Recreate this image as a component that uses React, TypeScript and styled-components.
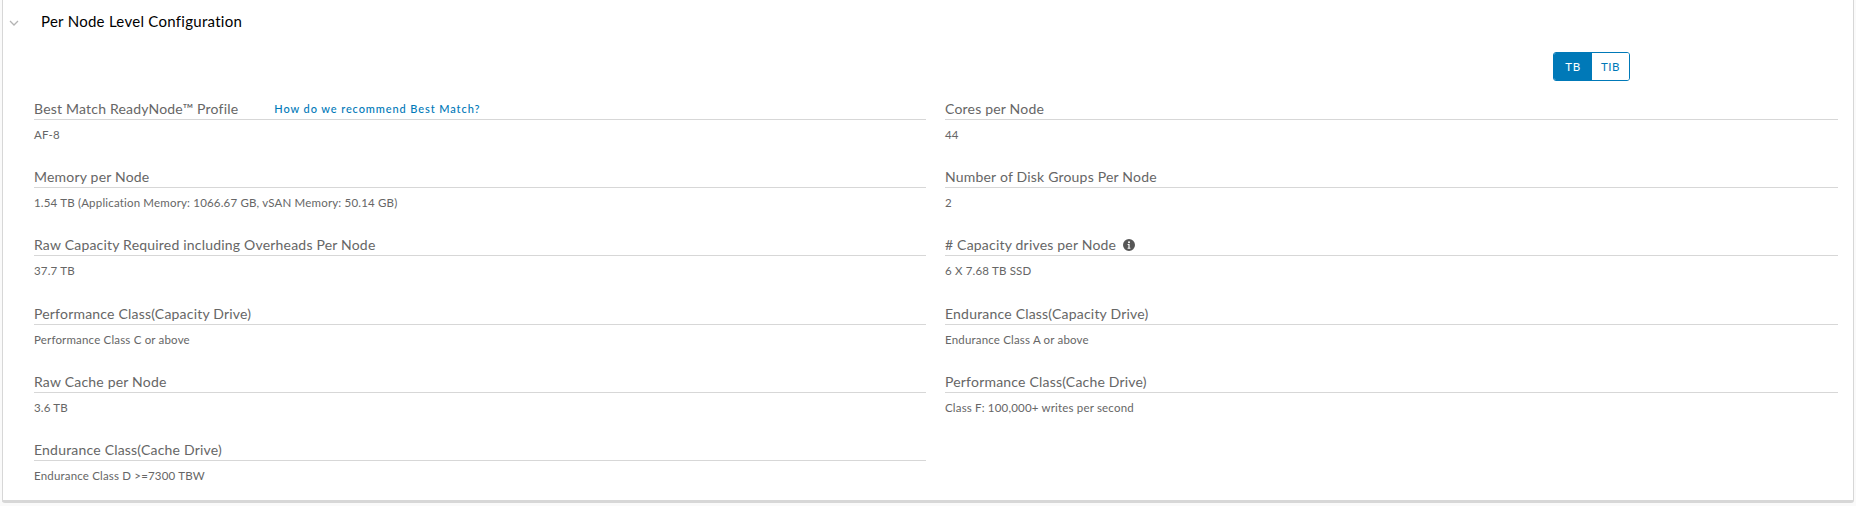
import { FC, ReactNode } from 'react';
import styled, { createGlobalStyle } from 'styled-components';

const GlobalStyle = createGlobalStyle`
  html, body {
    margin: 0;
    padding: 0;
    background: #fafafa;
    font-family: Lato, "Noto Sans", sans-serif;
  }
`;

const Page = styled.div`
  padding: 0 2px 0 2px;
  height: 506px;
  box-sizing: border-box;
  overflow: hidden;
`;

const Card = styled.section`
  box-sizing: border-box;
  height: 503px;
  background: #fff;
  border: 1px solid #d7d7d7;
  border-top: none;
  border-bottom-width: 3px;
  border-radius: 0 0 3px 3px;
`;

const CardHeader = styled.header`
  display: flex;
  align-items: center;
  height: 41px;
  padding-left: 4px;
`;

const Chevron = styled.svg`
  width: 14px;
  height: 14px;
  margin-top: 4px;
  margin-right: 20px;
  fill: none;
  stroke: #b4b4b4;
  stroke-width: 1.3;
`;

const CardTitle = styled.h2`
  margin: 0;
  font-size: 15px;
  line-height: 20px;
  font-weight: 400;
  letter-spacing: 0.28px;
  color: #000;
`;

const UnitRow = styled.div`
  display: flex;
  justify-content: flex-end;
  height: 29px;
  margin-top: 11px;
  padding-right: 223px;
`;

const Toggle = styled.div`
  display: flex;
  box-sizing: border-box;
  width: 77px;
  height: 29px;
  border: 1px solid #0079b8;
  border-radius: 3px;
  overflow: hidden;
`;

const UnitButton = styled.button<{ $active?: boolean }>`
  flex: ${(p) => (p.$active ? '0 0 38px' : '1')};
  padding: 0;
  border: none;
  font-family: inherit;
  font-size: 11.5px;
  letter-spacing: 0.6px;
  background: ${(p) => (p.$active ? '#0079b8' : '#fff')};
  color: ${(p) => (p.$active ? '#fff' : '#0079b8')};
`;

const Grid = styled.div`
  display: grid;
  grid-template-columns: 892px 893px;
  column-gap: 19px;
  row-gap: 26.2px;
  padding: 19px 0 0 31px;
`;

const Field = styled.div`
  min-width: 0;
`;

const Label = styled.div`
  display: flex;
  align-items: center;
  box-sizing: border-box;
  height: 20px;
  padding-bottom: 2px;
  border-bottom: 1px solid #d7d7d7;
  font-size: 14px;
  letter-spacing: 0.2px;
  color: #666;
`;

const Value = styled.div`
  margin-top: 7px;
  font-size: 11.5px;
  line-height: 15px;
  letter-spacing: 0.18px;
  color: #666;
`;

const HelpLink = styled.a`
  margin-left: 36px;
  font-size: 11px;
  font-weight: 500;
  letter-spacing: 0.9px;
  color: #0079b8;
`;

const InfoIcon = styled.svg`
  width: 12px;
  height: 12px;
  margin-left: 7px;
  fill: #565656;
`;

type FieldProps = {
  label: ReactNode;
  value: string;
};

const fields: FieldProps[] = [
  {
    label: (
      <>
        Best Match ReadyNode™ Profile
        <HelpLink>How do we recommend Best Match?</HelpLink>
      </>
    ),
    value: 'AF-8',
  },
  { label: 'Cores per Node', value: '44' },
  {
    label: 'Memory per Node',
    value: '1.54 TB (Application Memory: 1066.67 GB, vSAN Memory: 50.14 GB)',
  },
  { label: 'Number of Disk Groups Per Node', value: '2' },
  { label: 'Raw Capacity Required including Overheads Per Node', value: '37.7 TB' },
  {
    label: (
      <>
        # Capacity drives per Node
        <InfoIcon viewBox="0 0 12 12">
          <path
            fillRule="evenodd"
            d="M6 0a6 6 0 1 1 0 12A6 6 0 0 1 6 0ZM6 2.2a1 1 0 1 0 0 2 1 1 0 0 0 0-2ZM4.6 5v1h.8v2.8h-.8v1h2.8v-1h-.8V5Z"
          />
        </InfoIcon>
      </>
    ),
    value: '6 X 7.68 TB SSD',
  },
  { label: 'Performance Class(Capacity Drive)', value: 'Performance Class C or above' },
  { label: 'Endurance Class(Capacity Drive)', value: 'Endurance Class A or above' },
  { label: 'Raw Cache per Node', value: '3.6 TB' },
  { label: 'Performance Class(Cache Drive)', value: 'Class F: 100,000+ writes per second' },
  { label: 'Endurance Class(Cache Drive)', value: 'Endurance Class D >=7300 TBW' },
];

const App: FC = () => {
  return (
    <Page>
      <GlobalStyle />
      <Card>
        <CardHeader>
          <Chevron viewBox="0 0 14 14">
            <path d="M3 5l4 4 4-4" />
          </Chevron>
          <CardTitle>Per Node Level Configuration</CardTitle>
        </CardHeader>
        <UnitRow>
          <Toggle>
            <UnitButton $active>TB</UnitButton>
            <UnitButton>TIB</UnitButton>
          </Toggle>
        </UnitRow>
        <Grid>
          {fields.map((field, i) => (
            <Field key={i}>
              <Label>{field.label}</Label>
              <Value>{field.value}</Value>
            </Field>
          ))}
        </Grid>
      </Card>
    </Page>
  );
};

export default App;
